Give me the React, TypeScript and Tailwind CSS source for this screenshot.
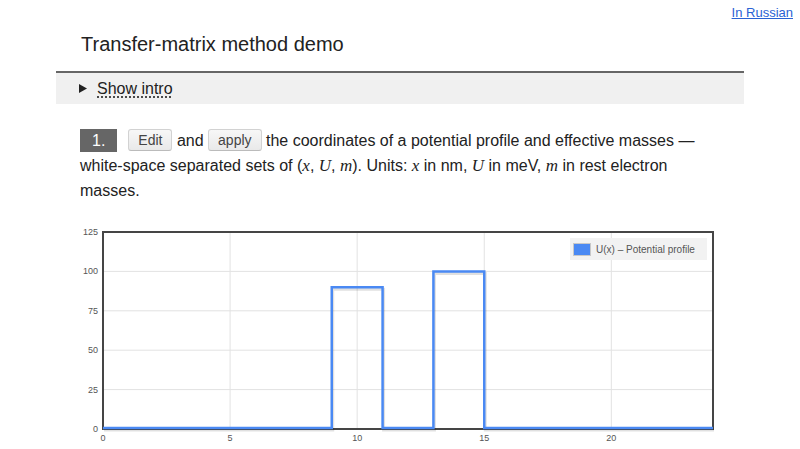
import React from 'react';

// potential profile: (x in nm, U in meV)
const profile: [number, number][] = [
  [0, 0], [9, 0], [9, 90], [11, 90], [11, 0],
  [13, 0], [13, 100], [15, 100], [15, 0], [24, 0],
];

const plot = { left: 47, right: 657, top: 12, bottom: 209, xMax: 24, yMax: 125 };
const sx = (v: number) => plot.left + (v / plot.xMax) * (plot.right - plot.left);
const sy = (u: number) => plot.bottom - (u / plot.yMax) * (plot.bottom - plot.top);

function PotentialChart() {
  const pts = profile.map(([x, u]) => `${sx(x)},${Math.min(sy(u), plot.bottom - 1)}`).join(' ');
  const xTicks = [0, 5, 10, 15, 20];
  const yTicks = [0, 25, 50, 75, 100, 125];

  return (
    <svg width={688} height={229} className="block" style={{ fontFamily: '"Liberation Sans", Arial, sans-serif' }}>
      {/* grid */}
      {xTicks.slice(1).map((t) => (
        <line key={`gx${t}`} x1={sx(t)} x2={sx(t)} y1={plot.top} y2={plot.bottom} stroke="#e2e2e2" />
      ))}
      {yTicks.slice(1, -1).map((t) => (
        <line key={`gy${t}`} x1={plot.left} x2={plot.right} y1={sy(t)} y2={sy(t)} stroke="#e2e2e2" />
      ))}

      {/* frame */}
      <rect x={plot.left} y={plot.top} width={plot.right - plot.left} height={plot.bottom - plot.top} fill="none" stroke="#454545" strokeWidth={2} />

      {/* axis labels */}
      {yTicks.map((t) => (
        <text key={`ly${t}`} x={plot.left - 5} y={sy(t) + 3} fontSize={9} fill="#555" textAnchor="end">{t}</text>
      ))}
      {xTicks.map((t) => (
        <text key={`lx${t}`} x={sx(t)} y={221} fontSize={9} fill="#555" textAnchor="middle">{t}</text>
      ))}

      {/* data line with soft shadow */}
      <polyline points={pts} fill="none" stroke="#000" strokeOpacity={0.12} strokeWidth={3} transform="translate(1,2)" />
      <polyline points={pts} fill="none" stroke="#4a89f3" strokeWidth={2.5} />

      {/* legend */}
      <rect x={514} y={18} width={137} height={22} fill="#f2f2f2" />
      <rect x={517.5} y={23.5} width={17} height={12} fill="#4a89f3" stroke="#c8c8c8" />
      <text x={540} y={33} fontSize={10} fill="#555">U(x) – Potential profile</text>
    </svg>
  );
}

function Btn({ children }: { children: React.ReactNode }) {
  return (
    <span className="inline-block h-[22px] px-[9px] align-[1px] text-[14px] leading-[20px] text-[#444] bg-gradient-to-b from-[#f7f7f7] to-[#e9e9e9] border border-[#d2d2d2] border-b-[#bbb] rounded-[3px]">
      {children}
    </span>
  );
}

const M = ({ children }: { children: React.ReactNode }) => (
  <i className="font-['Liberation_Serif',serif] text-[17px]">{children}</i>
);

export default function App() {
  return (
    <div className="w-[800px] h-[449px] overflow-hidden bg-white text-[#222] font-['Liberation_Sans',Arial,sans-serif]">
      <div className="flex justify-end pt-[5px] pr-[7px]">
        <a href="#" className="text-[13px] leading-[15px] text-[#2a62d4] underline">In Russian</a>
      </div>

      <div className="ml-[56px] w-[688px]">
        <h1 className="mt-[13px] pl-[25px] text-[20px] leading-[23px] font-normal text-[#222]">
          Transfer-matrix method demo
        </h1>

        <div className="mt-[15px] border-t-2 border-[#666]" />
        <div className="h-[31px] bg-[#f0f0f0] flex items-center pl-[23px]">
          <svg width="8" height="9" viewBox="0 0 8 9" className="mr-[10px]">
            <polygon points="0,0 8,4.5 0,9" fill="#222" />
          </svg>
          <span className="text-[16px] leading-[20px] text-[#222] underline decoration-dotted underline-offset-[3px]">
            Show intro
          </span>
        </div>

        <p className="mt-[24px] pl-[24px] w-[664px] text-[16px] leading-[25px]">
          <span className="inline-block px-[12px] mr-[11px] h-[23px] leading-[23px] bg-[#666] text-white">1.</span>
          <Btn>Edit</Btn> and <Btn>apply</Btn> the coordinates of a potential profile and effective masses —
          white-space separated sets of (<M>x</M>, <M>U</M>, <M>m</M>). Units: <M>x</M> in nm, <M>U</M> in meV,{' '}
          <M>m</M> in rest electron masses.
        </p>

        <div className="mt-[17px]">
          <PotentialChart />
        </div>
      </div>
    </div>
  );
}
